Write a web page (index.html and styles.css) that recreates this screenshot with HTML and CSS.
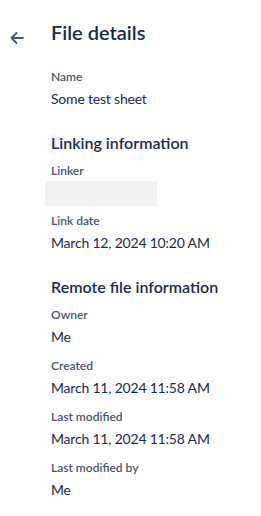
FILE: index.html
```html
<!DOCTYPE html>
<html lang="en">
<head>
    <meta charset="UTF-8">
    <meta name="viewport" content="width=device-width, initial-scale=1.0">
    <title>File details</title>
    <link rel="stylesheet" href="styles.css">
</head>
<body>
    <div class="panel">
        <div class="side">
            <button class="back" aria-label="Back">
                <svg width="24" height="24" viewBox="0 0 24 24" fill="none">
                    <path d="M18 12H6.5M11.5 7l-5 5 5 5" stroke="currentColor" stroke-width="1.8" stroke-linecap="round" stroke-linejoin="round"/>
                </svg>
            </button>
        </div>
        <div class="content">
            <h1>File details</h1>
            <div class="field first">
                <div class="label">Name</div>
                <div class="value">Some test sheet</div>
            </div>

            <h2>Linking information</h2>
            <div class="field">
                <div class="label">Linker</div>
                <div class="skeleton"></div>
            </div>
            <div class="field after-skeleton">
                <div class="label">Link date</div>
                <div class="value">March 12, 2024 10:20 AM</div>
            </div>

            <h2>Remote file information</h2>
            <div class="field">
                <div class="label">Owner</div>
                <div class="value">Me</div>
            </div>
            <div class="field">
                <div class="label">Created</div>
                <div class="value">March 11, 2024 11:58 AM</div>
            </div>
            <div class="field">
                <div class="label">Last modified</div>
                <div class="value">March 11, 2024 11:58 AM</div>
            </div>
            <div class="field">
                <div class="label">Last modified by</div>
                <div class="value">Me</div>
            </div>
        </div>
    </div>
</body>
</html>
```

FILE: styles.css
```css
body {
    margin: 0;
    background: #ffffff;
    font-family: Lato, "Liberation Sans", sans-serif;
    color: #172b4d;
}
.panel {
    display: flex;
    padding-top: 20px;
}
.side {
    width: 51px;
    flex-shrink: 0;
}
.back {
    display: flex;
    margin: 6px 0 0 5px;
    padding: 0;
    border: none;
    background: none;
    color: #44546f;
    cursor: pointer;
}
.content {
    flex: 1;
}
h1 {
    margin: 0;
    font-size: 20px;
    line-height: 24px;
    font-weight: 600;
}
h2 {
    margin: 24px 0 10px;
    font-size: 16px;
    line-height: 20px;
    font-weight: 600;
}
.field {
    margin-top: 11px;
}
.field.first {
    margin-top: 25px;
}
h2 + .field {
    margin-top: 0;
}
.field.after-skeleton {
    margin-top: 7px;
}
.label {
    font-size: 12px;
    line-height: 16px;
    font-weight: 600;
    color: #44546f;
    margin-bottom: 4px;
}
.value {
    font-size: 14px;
    line-height: 20px;
    letter-spacing: -0.2px;
}
.skeleton {
    width: 112px;
    height: 25px;
    margin: -2px 0 0 -6px;
    background: #f1f2f4;
}
```
